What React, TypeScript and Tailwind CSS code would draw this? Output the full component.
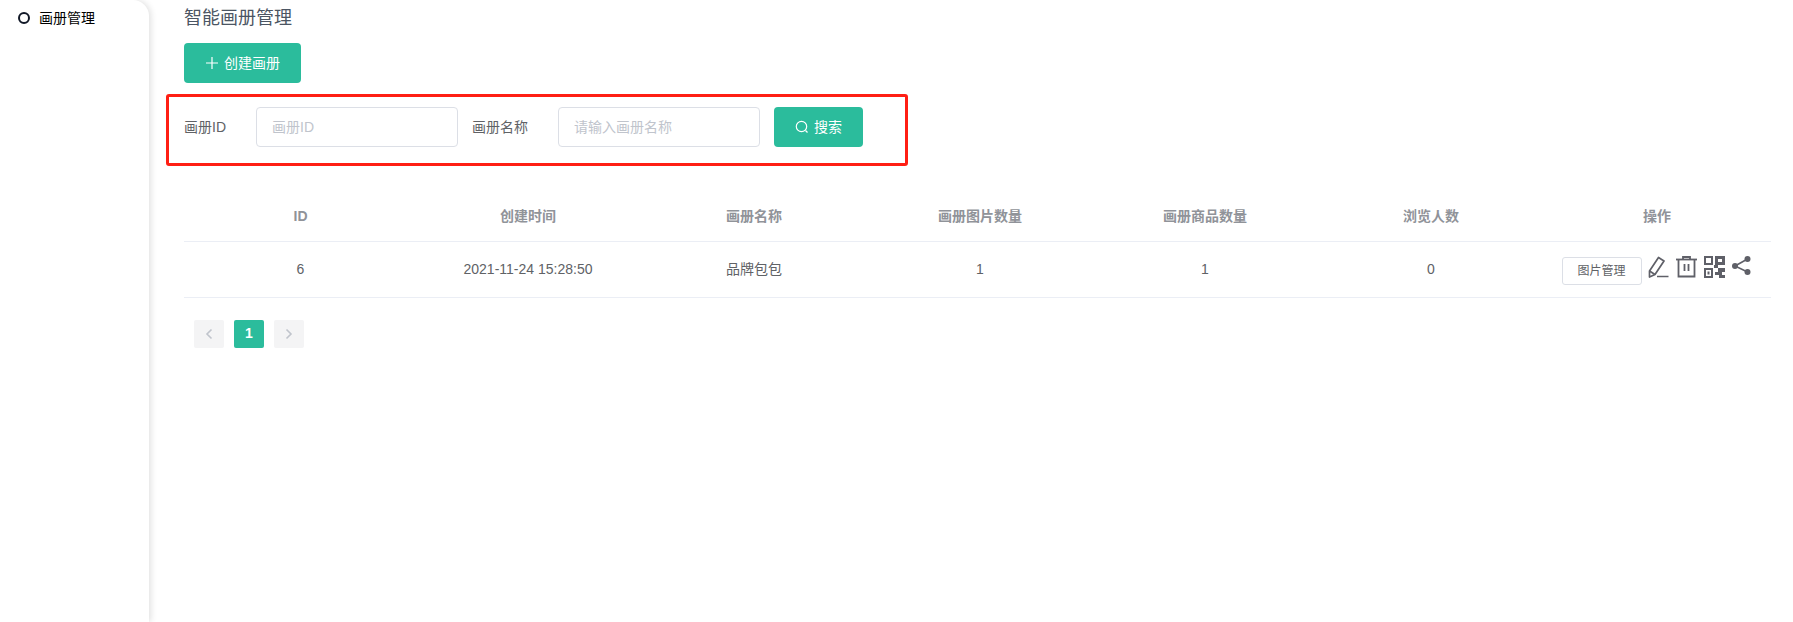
import React from "react";

const font = "font-['Liberation_Sans','Noto_Sans_CJK_SC',sans-serif]";

const columns = [
  { label: "ID", width: "w-[233px]" },
  { label: "创建时间", width: "w-[222px]" },
  { label: "画册名称", width: "w-[230px]" },
  { label: "画册图片数量", width: "w-[222px]" },
  { label: "画册商品数量", width: "w-[228px]" },
  { label: "浏览人数", width: "w-[224px]" },
  { label: "操作", width: "w-[228px]" },
];

const cells = ["6", "2021-11-24 15:28:50", "品牌包包", "1", "1", "0"];

function EditIcon() {
  return (
    <svg width="21" height="22" viewBox="0 0 21 22" fill="none" stroke="#5f6068" strokeWidth="1.7">
      <path d="M1.5 15 10.5 1.5 16 5 7 18.5 1.5 21Z" strokeLinejoin="round" />
      <path d="M1.5 15 7 18.5" />
      <path d="M9 20.5H20.5" strokeWidth="1.5" />
    </svg>
  );
}

function TrashIcon() {
  return (
    <svg width="21" height="22" viewBox="0 0 21 22" fill="none" stroke="#5f6068" strokeWidth="1.8">
      <path d="M0 3.5H21" />
      <path d="M7 3.5V1H14V3.5" />
      <path d="M2.5 3.5V20.5H18.5V3.5" />
      <path d="M8.5 8V15M12.5 8V15" />
    </svg>
  );
}

function QrIcon() {
  return (
    <svg width="21" height="22" viewBox="0 0 21 22" fill="#5f6068">
      <path d="M0 0H9V9H0ZM2 2V7H7V2Z" fillRule="evenodd" />
      <path d="M11 0H21V9H11ZM14 3V6H18V3Z" fillRule="evenodd" />
      <path d="M0 12H9V22H0ZM2 14V20H7V14Z" fillRule="evenodd" />
      <path d="M3.5 15.5H5.5V18.5H3.5Z" />
      <path d="M10 9H14V12H21V16H18V19H21V22H15V19H11V16H14V12H10Z" />
    </svg>
  );
}

function ShareIcon() {
  return (
    <svg width="19" height="19" viewBox="0 0 19 19" fill="#5f6068" stroke="#5f6068">
      <circle cx="15.5" cy="3" r="3" stroke="none" />
      <circle cx="3" cy="10" r="3" stroke="none" />
      <circle cx="15.5" cy="16" r="3" stroke="none" />
      <path d="M15.5 3 3 10 15.5 16" fill="none" strokeWidth="1.6" />
    </svg>
  );
}

export default function App() {
  return (
    <div className={`${font} flex h-[622px] w-full overflow-hidden bg-white`}>
      <aside className="w-[149px] shrink-0 rounded-tr-[16px] bg-white shadow-[2px_0_6px_rgba(0,0,0,0.12)]">
        <div className="flex items-center pl-[18px] pt-[9px] text-[14px] leading-[18px] text-black">
          <span className="mr-[9px] h-[12px] w-[12px] rounded-full border-2 border-[#111827]" />
          画册管理
        </div>
      </aside>

      <main className="min-w-0 flex-1 pl-[17px] pr-[22px]">
        <div className="ml-[18px] pt-[6px] text-[18px] leading-[24px] text-[#4b5563]">智能画册管理</div>

        <button className="ml-[18px] mt-[13px] flex h-[40px] w-[117px] items-center justify-center rounded-[4px] bg-[#2bbc9c] text-[14px] text-white">
          <svg className="mr-[5px]" width="14" height="14" viewBox="0 0 14 14" stroke="#fff" strokeWidth="1.2">
            <path d="M7 1V13M1 7H13" />
          </svg>
          创建画册
        </button>

        <div className="mt-[11px] flex h-[72px] w-[742px] items-center rounded-[3px] border-[3px] border-[#ff1f14] pb-[6px] pl-[15px] text-[14px] text-[#606266]">
          <span className="w-[72px]">画册ID</span>
          <input
            placeholder="画册ID"
            className="h-[40px] w-[202px] rounded-[4px] border border-[#dcdfe6] px-[15px] text-[14px] outline-none placeholder:text-[#c0c4cc]"
          />
          <span className="ml-[14px] w-[86px]">画册名称</span>
          <input
            placeholder="请输入画册名称"
            className="h-[40px] w-[202px] rounded-[4px] border border-[#dcdfe6] px-[15px] text-[14px] outline-none placeholder:text-[#c0c4cc]"
          />
          <button className="ml-[14px] flex h-[40px] w-[89px] items-center justify-center rounded-[4px] bg-[#2bbc9c] text-[14px] text-white">
            <svg className="mr-[5px]" width="14" height="14" viewBox="0 0 14 14" fill="none" stroke="#fff" strokeWidth="1.2">
              <circle cx="6.5" cy="6.5" r="5.2" />
              <path d="M10.5 10.5 12.5 12.5" />
            </svg>
            搜索
          </button>
        </div>

        <table className="ml-[18px] mt-[25px] w-[1587px] table-fixed border-collapse text-center text-[14px]">
          <thead>
            <tr className="h-[50px] border-b border-[#ebeef5] text-[#909399]">
              {columns.map((c) => (
                <th key={c.label} className={`${c.width} pt-[2px] font-bold`}>
                  {c.label}
                </th>
              ))}
            </tr>
          </thead>
          <tbody>
            <tr className="h-[56px] border-b border-[#ebeef5] text-[#606266]">
              {cells.map((c, i) => (
                <td key={i}>{c}</td>
              ))}
              <td>
                <div className="flex items-start justify-center pr-[2px] pt-[2px]">
                  <button className="mt-[1px] h-[28px] w-[80px] rounded-[3px] border border-[#dcdfe6] text-[12px] text-[#606266]">
                    图片管理
                  </button>
                  <span className="ml-[6px] flex items-start gap-[7px]">
                    <EditIcon />
                    <TrashIcon />
                    <QrIcon />
                    <ShareIcon />
                  </span>
                </div>
              </td>
            </tr>
          </tbody>
        </table>

        <div className="ml-[28px] mt-[22px] flex gap-[10px]">
          <button className="flex h-[28px] w-[30px] items-center justify-center rounded-[2px] bg-[#f4f4f5]">
            <svg width="8" height="12" viewBox="0 0 8 12" fill="none" stroke="#c0c4cc" strokeWidth="1.6">
              <path d="M6.5 1.5 2 6 6.5 10.5" />
            </svg>
          </button>
          <button className="h-[28px] w-[30px] rounded-[2px] bg-[#2bbc9c] text-[14px] font-bold text-white">1</button>
          <button className="flex h-[28px] w-[30px] items-center justify-center rounded-[2px] bg-[#f4f4f5]">
            <svg width="8" height="12" viewBox="0 0 8 12" fill="none" stroke="#c0c4cc" strokeWidth="1.6">
              <path d="M1.5 1.5 6 6 1.5 10.5" />
            </svg>
          </button>
        </div>
      </main>
    </div>
  );
}
